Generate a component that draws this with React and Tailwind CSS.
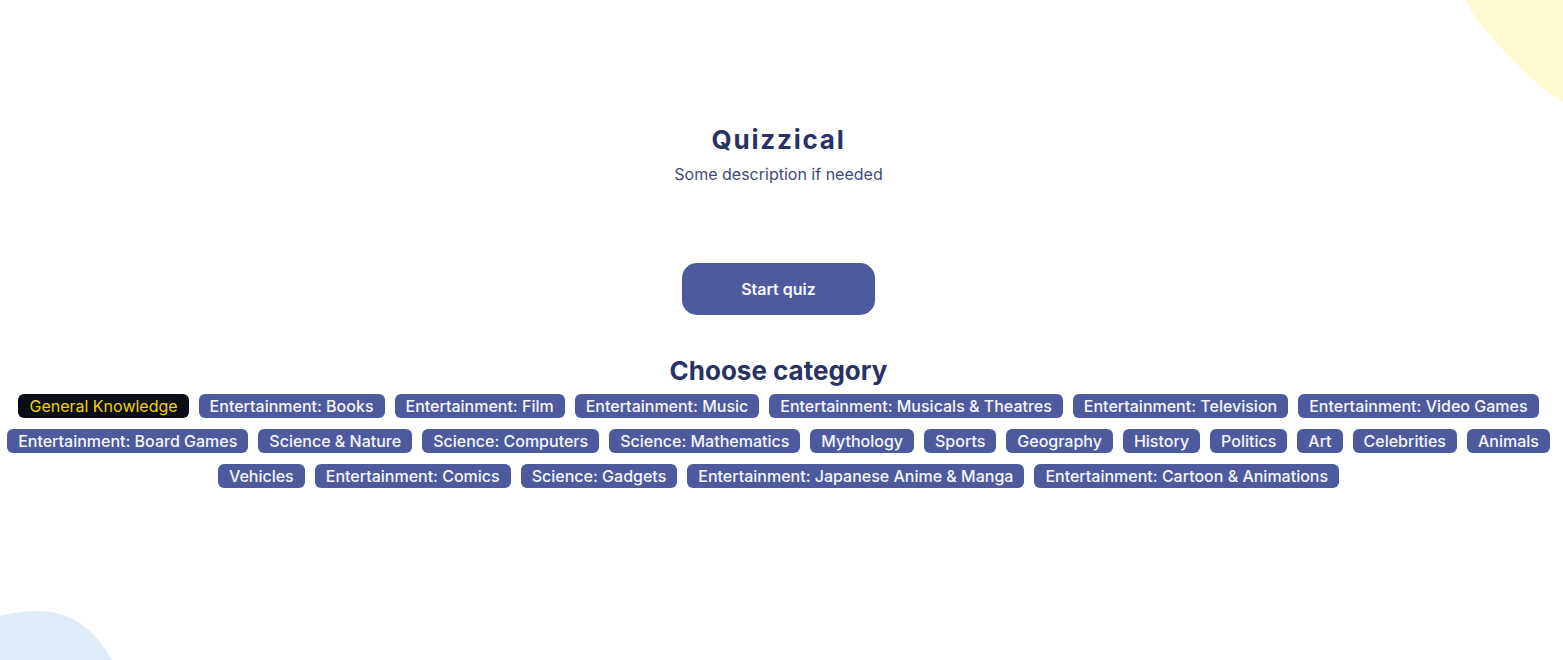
import React, { useState } from "react";

const categories = [
  "General Knowledge",
  "Entertainment: Books",
  "Entertainment: Film",
  "Entertainment: Music",
  "Entertainment: Musicals & Theatres",
  "Entertainment: Television",
  "Entertainment: Video Games",
  "Entertainment: Board Games",
  "Science & Nature",
  "Science: Computers",
  "Science: Mathematics",
  "Mythology",
  "Sports",
  "Geography",
  "History",
  "Politics",
  "Art",
  "Celebrities",
  "Animals",
  "Vehicles",
  "Entertainment: Comics",
  "Science: Gadgets",
  "Entertainment: Japanese Anime & Manga",
  "Entertainment: Cartoon & Animations",
];

export default function App() {
  const [selected, setSelected] = useState("General Knowledge");
  return (
    <div
      className="relative w-full h-[660px] overflow-hidden bg-white"
      style={{ fontFamily: "Inter, 'Noto Sans', sans-serif" }}
    >
      <svg className="absolute top-0 right-0" width="110" height="110" viewBox="0 0 110 110">
        <path d="M12 0 C 25 25, 45 45, 65 65 C 80 80, 92 92, 110 102 L110 0 Z" fill="#FFFAD1" />
      </svg>
      <svg className="absolute bottom-0 left-0" width="120" height="50" viewBox="0 0 120 50">
        <path d="M0 6 C 15 2, 35 0, 50 2 C 75 6, 95 20, 112 50 L0 50 Z" fill="#DEEBF8" />
      </svg>

      <div className="relative flex flex-col items-center pt-[122px] pr-[6px]">
        <h1 className="text-[26px] leading-[36px] font-bold tracking-[1.8px] text-[#293264]">Quizzical</h1>
        <p className="mt-[6px] text-[16px] leading-[20px] text-[#3F4A7E]">Some description if needed</p>
        <button className="mt-[79px] w-[193px] h-[52px] rounded-[15px] bg-[#4D5B9E] text-[#F5F7FB] text-[16px] font-semibold">
          Start quiz
        </button>
        <h2 className="mt-[40px] text-[26px] leading-[32px] font-bold text-[#293264]">Choose category</h2>
        <div className="mt-[7px] flex flex-wrap justify-center gap-x-[10px] gap-y-[11px] px-[3px]">
          {categories.map((c) => (
            <button
              key={c}
              onClick={() => setSelected(c)}
              className={
                c === selected
                  ? "h-[24px] px-[11px] rounded-[6px] bg-[#0B0D17] text-[#F2D300] text-[16px] leading-[24px]"
                  : "h-[24px] px-[11px] rounded-[6px] bg-[#4D5B9E] text-[#F5F7FB] text-[16px] leading-[24px] font-medium"
              }
            >
              {c}
            </button>
          ))}
        </div>
      </div>
    </div>
  );
}
